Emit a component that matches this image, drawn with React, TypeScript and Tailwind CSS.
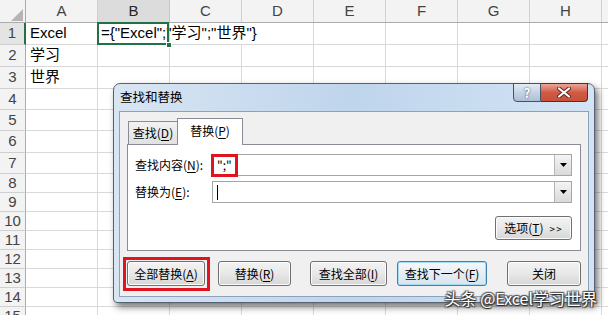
import React from 'react';

const sheetFont = { fontFamily: '"Liberation Sans", "Noto Sans CJK SC", sans-serif' };
const uiFont = { fontFamily: '"Noto Sans CJK SC", "Liberation Sans", sans-serif' };

const cols = ['A', 'B', 'C', 'D', 'E', 'F', 'G', 'H', ''];
const rowHeights = [
  'h-[22px]', 'h-[22px]', 'h-[22px]', 'h-[21px]', 'h-[21px]', 'h-[22px]', 'h-[21px]',
  'h-[19px]', 'h-[19px]', 'h-[19px]', 'h-[19px]', 'h-[19px]', 'h-[19px]', 'h-[19px]', 'h-[19px]',
];
const cellText: Record<string, string> = { '1A': 'Excel', '2A': '学习', '3A': '世界' };

const Key: React.FC<{ k: string }> = ({ k }) => (
  <span className="underline underline-offset-[2px] decoration-[1px]">{k}</span>
);

const Sheet: React.FC = () => (
  <div style={sheetFont} className="text-[15px] text-black">
    {/* column headers */}
    <div className="flex h-[23px] bg-[#f3f3f3] border-b border-[#ababab]">
      <div className="w-[26px] shrink-0 border-r border-[#ababab] flex items-end justify-end pr-[2px] pb-[1px]">
        <svg width="12" height="12" viewBox="0 0 12 12">
          <polygon points="12,0 12,12 0,12" fill="#b5b5b5" />
        </svg>
      </div>
      {cols.map((c, i) => (
        <div
          key={i}
          className={
            c === 'B'
              ? 'w-[72px] shrink-0 border-r border-[#c6c6c6] bg-[#dcdcdc] text-[#262626] flex items-center justify-center'
              : 'w-[72px] shrink-0 border-r border-[#d0d0d0] text-[#444] flex items-center justify-center'
          }
        >
          {c}
        </div>
      ))}
    </div>

    {rowHeights.map((h, r) => (
      <div key={r} className={`flex ${h}`}>
        <div
          className={
            r === 0
              ? 'w-[26px] shrink-0 bg-[#e4e4e4] border-b border-[#d0d0d0] border-r-2 border-r-[#217346] text-[#444] flex items-center justify-center'
              : 'w-[26px] shrink-0 bg-[#f3f3f3] border-b border-[#d0d0d0] border-r border-r-[#ababab] text-[#444] flex items-center justify-center'
          }
        >
          {r + 1}
        </div>
        {cols.map((c, i) => {
          const key = `${r + 1}${c}`;
          if (r === 0 && c === 'B') {
            return (
              <div key={i} className="w-[72px] shrink-0 border-r border-b border-[#d9d9d9] relative flex items-center pl-[3px] whitespace-nowrap">
                <span className="relative">={'{'}"Excel";"学习";"世界"{'}'}</span>
                <div className="absolute left-[-1px] top-[-1px] right-[0px] bottom-[-1px] border-2 border-[#217346]" />
                <div className="absolute right-[-3px] bottom-[-4px] w-[6px] h-[6px] bg-[#217346] border border-white" />
              </div>
            );
          }
          return (
            <div
              key={i}
              className={
                r === 0 && c === 'C'
                  ? 'w-[72px] shrink-0 border-b border-[#d9d9d9] flex items-center pl-[4px]'
                  : 'w-[72px] shrink-0 border-r border-b border-[#d9d9d9] flex items-center pl-[4px] whitespace-nowrap'
              }
            >
              {cellText[key] ?? ''}
            </div>
          );
        })}
      </div>
    ))}
  </div>
);

const Btn: React.FC<{ className: string; focus?: boolean; children: React.ReactNode }> = ({ className, focus, children }) => (
  <div
    className={
      focus
        ? `${className} h-[25px] shrink-0 rounded-[3px] border border-[#3c7fb1] shadow-[inset_0_0_0_1px_#a8dcf6] bg-gradient-to-b from-[#f4f8fb] to-[#d8e4ec] flex items-center justify-center text-[12px] text-black`
        : `${className} h-[25px] shrink-0 rounded-[3px] border border-[#707070] shadow-[inset_0_0_0_1px_#fbfbfb] bg-gradient-to-b from-[#f3f3f3] via-[#e8e8e8] to-[#d6d6d6] flex items-center justify-center text-[12px] text-black`
    }
  >
    {children}
  </div>
);

const Combo: React.FC<{ children?: React.ReactNode }> = ({ children }) => (
  <div className="flex-1 h-[22px] border border-[#a6a6a6] bg-white flex items-center relative">
    <div className="flex-1 pl-[3px] text-[12px] flex items-center h-full relative">{children}</div>
    <div className="w-[17px] h-[20px] border-l border-[#b5b5b5] bg-gradient-to-b from-[#f4f4f4] to-[#dadada] flex items-center justify-center">
      <svg width="7" height="4" viewBox="0 0 7 4">
        <polygon points="0,0 7,0 3.5,4" fill="#000" />
      </svg>
    </div>
  </div>
);

const Dialog: React.FC = () => (
  <div
    style={uiFont}
    className="absolute left-[113px] top-[83px] w-[482px] h-[220px] rounded-t-[7px] rounded-b-[4px] border border-[#56626f] bg-gradient-to-r from-[#d8e5f3] via-[#bfd5ec] to-[#d3e4f5] shadow-[3px_4px_7px_rgba(0,0,0,0.55)] flex flex-col"
  >
    {/* title bar */}
    <div className="h-[27px] shrink-0 flex items-center pl-[6px] text-[12.5px] text-black relative">
      查找和替换
      <div className="absolute top-[-1px] right-[6px] flex">
        <div className="w-[28px] h-[19px] border border-[#46525f] rounded-bl-[4px] bg-gradient-to-b from-[#e3ebf4] via-[#c5d4e5] to-[#aebfd3] flex items-center justify-center text-[13px] font-bold text-white [text-shadow:0_0_2px_#2c3947]">
          ?
        </div>
        <div className="w-[47px] h-[19px] border border-l-0 border-[#5a2c26] rounded-br-[4px] bg-gradient-to-b from-[#e9a597] via-[#d15a45] to-[#c8503b] flex items-center justify-center">
          <svg width="14" height="11" viewBox="0 0 14 11">
            <path d="M2 1.5 L12 9.5 M12 1.5 L2 9.5" stroke="#5b2a22" strokeWidth="4" strokeLinecap="round" />
            <path d="M2 1.5 L12 9.5 M12 1.5 L2 9.5" stroke="#ffffff" strokeWidth="2.2" strokeLinecap="round" />
          </svg>
        </div>
      </div>
    </div>

    {/* client area */}
    <div className="mx-[5px] mb-[5px] flex-1 border border-[#8da2ba] bg-[#f0f0f0] px-[7px] pt-[6px] flex flex-col text-[12px] text-black">
      {/* tabs */}
      <div className="flex items-end h-[27px] mb-[-1px] relative z-10">
        <div className="ml-[1px] mb-[1px] w-[49px] h-[23px] border border-r-0 border-b-0 border-[#898c95] bg-gradient-to-b from-[#f2f2f2] to-[#e1e1e1] flex items-center justify-center">
          查找(<Key k="D" />)
        </div>
        <div className="w-[66px] h-[27px] border border-b-0 border-[#898c95] bg-white flex items-center justify-center pb-[2px]">
          替换(<Key k="P" />)
        </div>
      </div>

      {/* panel */}
      <div className="h-[107px] border border-[#898c95] bg-white pl-[7px] pr-[8px] pt-[9px] flex flex-col">
        <div className="flex items-center">
          <div className="w-[77px] shrink-0">
            查找内容(<Key k="N" />):
          </div>
          <Combo>
            <span className="pl-[1px]">";"</span>
            <div className="absolute left-[-2px] top-[-1px] w-[27px] h-[23px] border-[3px] border-[#e0141f]" />
          </Combo>
        </div>
        <div className="flex items-center mt-[5px]">
          <div className="w-[77px] shrink-0">
            替换为(<Key k="E" />):
          </div>
          <Combo>
            <div className="ml-[1px] w-[1px] h-[15px] bg-black" />
          </Combo>
        </div>
        <div className="flex justify-end mt-[13px]">
          <div className="w-[77px] h-[24px] rounded-[3px] border border-[#707070] shadow-[inset_0_0_0_1px_#fbfbfb] bg-gradient-to-b from-[#f3f3f3] via-[#e8e8e8] to-[#d6d6d6] flex items-center justify-center gap-[6px]">
            <span>
              选项(<Key k="T" />)
            </span>
            <span className="text-[10px] tracking-[1px]">&gt;&gt;</span>
          </div>
        </div>
      </div>

      {/* buttons */}
      <div className="flex mt-[10px]">
        <div className="relative">
          <Btn className="w-[78px]">
            全部替换(<Key k="A" />)
          </Btn>
          <div className="absolute left-[-4px] top-[-4px] right-[-5px] bottom-[-5px] border-[3px] border-[#e0141f]" />
        </div>
        <Btn className="w-[73px] ml-[13px]">
          替换(<Key k="R" />)
        </Btn>
        <Btn className="w-[77px] ml-[19px]">
          查找全部(<Key k="I" />)
        </Btn>
        <Btn className="w-[90px] ml-[10px]" focus>
          查找下一个(<Key k="F" />)
        </Btn>
        <Btn className="w-[74px] ml-[20px]">关闭</Btn>
      </div>
    </div>
  </div>
);

export default function App() {
  return (
    <div className="relative w-[608px] h-[315px] overflow-hidden bg-white">
      <Sheet />
      <Dialog />
      {/* watermark */}
      <div
        style={uiFont}
        className="absolute right-[11px] top-[286px] text-[16px] text-white whitespace-nowrap [text-shadow:1px_1px_1px_#222,-1px_-1px_1px_#555,1px_-1px_1px_#555,-1px_1px_1px_#555]"
      >
        头条 @Excel学习世界
      </div>
    </div>
  );
}
